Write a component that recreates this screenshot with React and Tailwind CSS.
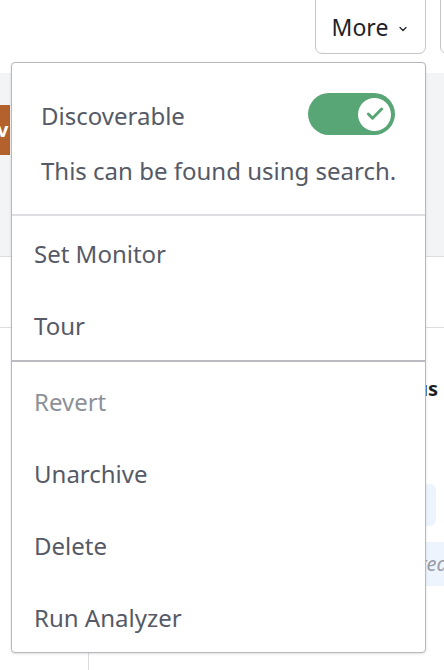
import { Check, ChevronDown } from "lucide-react";

const groupOne = ["Set Monitor", "Tour"];
const groupTwo = [
  { label: "Revert", muted: true },
  { label: "Unarchive" },
  { label: "Delete" },
  { label: "Run Analyzer" },
];

function MenuItem({ label, muted }) {
  return (
    <div
      className={`h-[72px] flex items-center pl-[22px] pt-[4px] text-[24px] ${
        muted ? "text-[#8c9099]" : "text-[#555a66]"
      }`}
    >
      {label}
    </div>
  );
}

export default function App() {
  return (
    <div
      className="relative w-[444px] h-[670px] overflow-hidden bg-white"
      style={{ fontFamily: "'Noto Sans', 'Open Sans', sans-serif" }}
    >
      {/* page header with actions */}
      <div className="h-[73px] flex items-start">
        <button className="shrink-0 -mt-[8px] h-[62px] w-[111px] ml-[315px] flex items-center justify-center gap-[9px] pt-[9px] border-[1.5px] border-[#c4c6cb] rounded-[7px] text-[23px] text-[#1f2329]">
          More
          <ChevronDown size={12} strokeWidth={2.5} className="mt-[2px]" />
        </button>
        <div className="shrink-0 -mt-[8px] h-[62px] w-[20px] ml-[14px] border-[1.5px] border-[#c4c6cb] rounded-[7px]" />
      </div>

      {/* grey band */}
      <div className="h-[184px] bg-[#f3f4f6] border-b border-[#dcdde1] pt-[32px]">
        <div className="w-[10px] h-[50px] bg-[#b3612d] overflow-hidden flex items-center">
          <span className="text-white font-bold text-[20px] -ml-[3px]">v</span>
        </div>
      </div>

      <div className="h-[71px] border-b border-[#dcdde1]" />

      <div className="flex">
        <div className="w-[89px] h-[400px] border-r border-[#d9dadd]" />
        <div className="flex-1 flex flex-col items-end pt-[48px]">
          <div className="text-[20px] font-bold text-[#1b1e23] pr-[6px] leading-[26px]">
            Status
          </div>
          <div className="mt-[82px] mr-[8px] w-[120px] h-[42px] rounded-[6px] bg-[#eef4fd]" />
          <div className="mt-[16px] w-[140px] h-[44px] bg-[#eef4fd] flex items-center justify-end overflow-hidden">
            <span className="italic text-[20px] text-[#9a9da5] -mr-[4px] whitespace-nowrap">
              Required
            </span>
          </div>
        </div>
      </div>

      {/* dropdown menu */}
      <div className="absolute left-[11px] top-[62px] w-[415px] bg-white border-[1.5px] border-[#b5b8bd] rounded-[4px] shadow-sm">
        <div className="h-[153px] pt-[30px] pl-[29px] pr-[30px] border-b-2 border-[#dddee2]">
          <div className="flex items-center justify-between">
            <span className="text-[24px] text-[#555a66] pt-[3px]">Discoverable</span>
            <div className="w-[87px] h-[42px] rounded-full bg-[#58a575] flex items-center justify-end pr-[4px]">
              <div className="w-[33px] h-[33px] rounded-full bg-white flex items-center justify-center">
                <Check size={20} strokeWidth={3.5} className="text-[#58a575]" />
              </div>
            </div>
          </div>
          <div className="mt-[21px] text-[24px] text-[#555a66] leading-[30px] whitespace-nowrap">
            This can be found using search.
          </div>
        </div>
        <div className="border-b-2 border-[#b9bbc0]">
          {groupOne.map((label) => (
            <MenuItem key={label} label={label} />
          ))}
        </div>
        <div className="pt-[2px]">
          {groupTwo.map((item) => (
            <MenuItem key={item.label} label={item.label} muted={item.muted} />
          ))}
        </div>
      </div>
    </div>
  );
}
